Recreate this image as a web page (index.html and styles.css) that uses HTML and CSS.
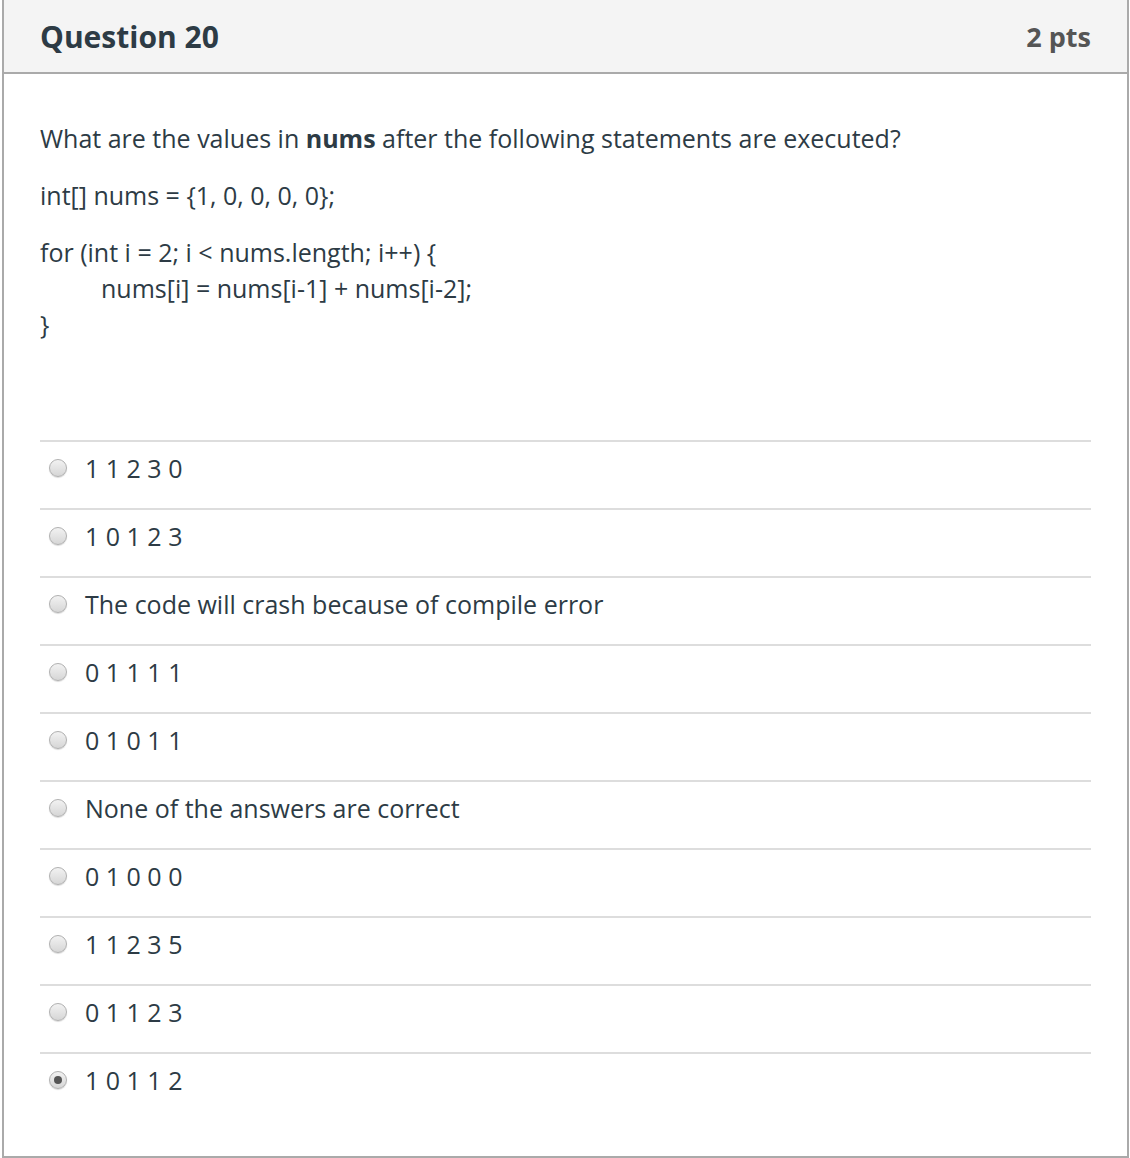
FILE: index.html
```html
<!DOCTYPE html>
<html>
<head>
<meta charset="utf-8">
<link rel="stylesheet" href="styles.css">
</head>
<body>
<div class="card">
  <div class="header">
    <span class="title">Question 20</span>
    <span class="pts">2 pts</span>
  </div>
  <div class="content">
    <p class="para">What are the values in <strong>nums</strong> after the following statements are executed?</p>
    <p class="para">int[] nums = {1, 0, 0, 0, 0};</p>
    <p class="para">for (int i = 2; i &lt; nums.length; i++) {<br><span class="indent"></span>nums[i] = nums[i-1] + nums[i-2];<br>}</p>
    <div class="answers">
      <label class="answer"><span class="radio"></span><span class="atext">1 1 2 3 0</span></label>
      <label class="answer"><span class="radio"></span><span class="atext">1 0 1 2 3</span></label>
      <label class="answer"><span class="radio"></span><span class="atext">The code will crash because of compile error</span></label>
      <label class="answer"><span class="radio"></span><span class="atext">0 1 1 1 1</span></label>
      <label class="answer"><span class="radio"></span><span class="atext">0 1 0 1 1</span></label>
      <label class="answer"><span class="radio"></span><span class="atext">None of the answers are correct</span></label>
      <label class="answer"><span class="radio"></span><span class="atext">0 1 0 0 0</span></label>
      <label class="answer"><span class="radio"></span><span class="atext">1 1 2 3 5</span></label>
      <label class="answer"><span class="radio"></span><span class="atext">0 1 1 2 3</span></label>
      <label class="answer"><span class="radio checked"></span><span class="atext">1 0 1 1 2</span></label>
    </div>
  </div>
</div>
</body>
</html>
```

FILE: styles.css
```css
html, body {
  margin: 0;
  padding: 0;
  background: #fff;
}
body {
  font-family: "Open Sans", "Noto Sans", sans-serif;
  color: #2d3b45;
}
.card {
  margin-left: 2px;
  width: 1123px;
  border: 2px solid #aaaaaa;
  border-top: none;
}
.header {
  height: 72px;
  background: #f4f4f4;
  border-bottom: 2px solid #aaaaaa;
  display: flex;
  align-items: center;
  justify-content: space-between;
  padding: 0 36px;
}
.title {
  font-size: 30px;
  font-weight: 700;
  color: #2d3b45;
}
.pts {
  font-size: 27px;
  font-weight: 700;
  color: #555555;
}
.content {
  padding: 46px 36px 36px;
}
.para {
  margin: 0 0 21px;
  font-size: 25px;
  line-height: 36px;
}
.indent {
  display: inline-block;
  width: 61px;
}
.answers {
  margin-top: 98px;
}
.answer {
  display: flex;
  align-items: center;
  border-top: 2px solid #dddddd;
  height: 51px;
  padding-bottom: 15px;
}
.radio {
  width: 16px;
  height: 16px;
  border-radius: 50%;
  border: 1px solid #b0b0b0;
  background: linear-gradient(#f2f2f2, #d6d6d6);
  box-shadow: 0 1px 1px rgba(0,0,0,0.15);
  margin-left: 9px;
  margin-right: 18px;
  position: relative;
  flex: none;
}
.radio.checked::after {
  content: "";
  position: absolute;
  left: 4px;
  top: 4px;
  width: 8px;
  height: 8px;
  border-radius: 50%;
  background: #555;
}
.atext {
  font-size: 25px;
  line-height: 36px;
}
```
